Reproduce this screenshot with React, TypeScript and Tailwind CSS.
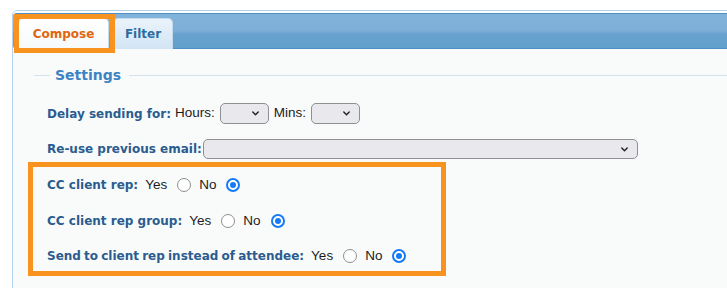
import type { ReactNode } from "react";

const labelCls = "font-['DejaVu_Sans',sans-serif] text-[12px] font-bold text-[#2b5c8f] whitespace-nowrap";
const textCls = "font-['Liberation_Sans',Arial,sans-serif] text-[13.5px] text-[#1c1c1e] whitespace-nowrap";

function Chevron() {
  return (
    <svg width="7" height="5" viewBox="0 0 7 5" className="shrink-0">
      <path d="M0.8 0.9 L3.5 3.7 L6.2 0.9" fill="none" stroke="#222" strokeWidth="1.4" strokeLinecap="round" strokeLinejoin="round" />
    </svg>
  );
}

function Select({ className }: { className: string }) {
  return (
    <div
      className={
        "flex items-center justify-end pr-[9px] rounded-[5px] border border-[#8e8e93] bg-[#e9e9ed] " +
        className
      }
    >
      <Chevron />
    </div>
  );
}

function Radio({ checked }: { checked?: boolean }) {
  if (checked) {
    return (
      <span className="flex w-[14px] h-[14px] shrink-0 items-center justify-center rounded-full border-[2.5px] border-[#167af6] bg-white">
        <span className="w-[6px] h-[6px] rounded-full bg-[#167af6]" />
      </span>
    );
  }
  return <span className="block w-[14px] h-[14px] shrink-0 rounded-full border-[1.5px] border-[#8e8e93] bg-white" />;
}

function YesNoRow({ label, className = "" }: { label: string; className?: string }) {
  return (
    <div className={"flex h-[20px] items-center " + className}>
      <span className={labelCls}>{label}</span>
      <span className={textCls + " ml-[7px]"}>Yes</span>
      <span className="ml-[10px]">
        <Radio />
      </span>
      <span className={textCls + " ml-[8px]"}>No</span>
      <span className="ml-[10px]">
        <Radio checked />
      </span>
    </div>
  );
}

function Tab({ children, active }: { children: ReactNode; active?: boolean }) {
  return (
    <div
      className={
        "flex h-[31px] -mb-px items-center justify-center rounded-t-[5px] border border-b-0 font-['DejaVu_Sans',sans-serif] text-[12px] font-bold " +
        (active
          ? "w-[91px] border-[#c5dbec] bg-gradient-to-b from-[#ffffff] to-[#f6f9fa] text-[#e0660f]"
          : "w-[60px] border-[#c5dbec] bg-gradient-to-b from-[#eaf3fb] to-[#d2e4f4] text-[#2e6a9f]")
      }
    >
      {children}
    </div>
  );
}

export default function App() {
  return (
    <div className="relative w-[727px] h-[288px] overflow-hidden bg-white">
      <div className="ml-[12px] mt-[10px] w-[760px] h-[320px] rounded-[5px] border border-[#b4d3ec] bg-white pt-[2px] flex flex-col">
        <div className="flex h-[36px] items-end gap-[4px] rounded-[4px] border-y border-[#4f8ec6] bg-[linear-gradient(to_bottom,#82b3da_0%,#7daed7_50%,#68a2cd_58%,#62a0cc_100%)] pl-[5px]">
          <Tab active>Compose</Tab>
          <Tab>Filter</Tab>
        </div>

        <div className="flex-1 bg-[#f9fbfb] pl-[21px] pt-[17px]">
          <div className="flex h-[18px] items-center">
            <div className="h-px w-[16px] bg-[#cfe3f3]" />
            <span className="ml-[5px] mr-[8px] font-['DejaVu_Sans',sans-serif] text-[14px] font-bold text-[#3e83c3]">
              Settings
            </span>
            <div className="h-px flex-1 bg-[#cfe3f3]" />
          </div>

          <div className="pl-[13px]">
            <div className="mt-[19px] flex h-[21px] items-center">
              <span className={labelCls}>Delay sending for:</span>
              <span className={textCls + " ml-[4px]"}>Hours:</span>
              <Select className="ml-[5px] w-[49px] h-[21px]" />
              <span className={textCls + " ml-[5px]"}>Mins:</span>
              <Select className="ml-[5px] w-[49px] h-[21px]" />
            </div>

            <div className="mt-[15px] flex h-[20px] items-center">
              <span className={labelCls}>Re-use previous email:</span>
              <Select className="ml-px w-[435px] h-[20px]" />
            </div>

            <div className="mt-[3px] -ml-[19px] w-[418px] border-[5px] border-[#f7931e] pl-[14px] pt-[8px] pb-[5px]">
              <YesNoRow label="CC client rep:" />
              <YesNoRow label="CC client rep group:" className="mt-[16px]" />
              <YesNoRow label="Send to client rep instead of attendee:" className="mt-[15px] [word-spacing:-1px]" />
            </div>
          </div>
        </div>
      </div>

      <div className="absolute left-[14px] top-[14px] w-[101px] h-[39px] border-[5px] border-[#f7931e]" />
    </div>
  );
}
